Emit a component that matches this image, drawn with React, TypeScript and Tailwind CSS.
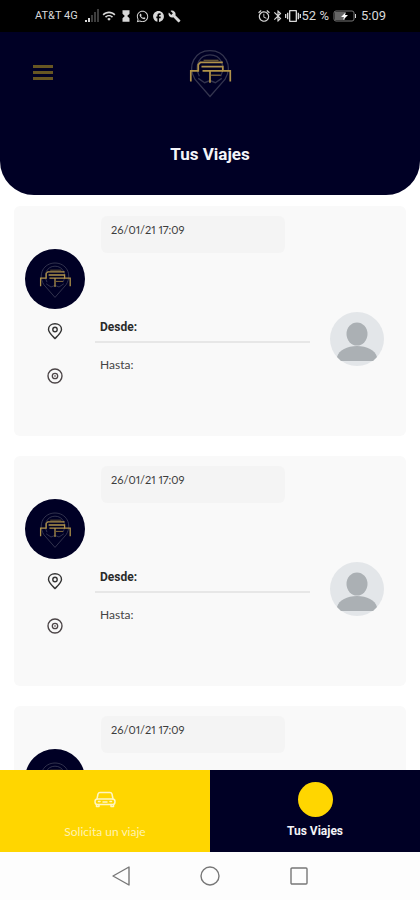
import React from "react";
import {
  MdAlarm,
  MdBluetooth,
  MdBuild,
  MdFacebook,
  MdHourglassFull,
  MdVibration,
  MdWifi,
} from "react-icons/md";
import { FaWhatsapp } from "react-icons/fa";

type Trip = { id: number; date: string };

const trips: Trip[] = [
  { id: 1, date: "26/01/21 17:09" },
  { id: 2, date: "26/01/21 17:09" },
  { id: 3, date: "26/01/21 17:09" },
];

function Logo({ className }: { className: string }) {
  return (
    <svg viewBox="0 0 60 60" fill="none" className={className} aria-hidden="true">
      <g stroke="#34354f" strokeWidth="1.2">
        <path d="M30 53 L16 37 C8 24 16 10 30 10 C44 10 52 24 44 37 Z" />
        <path d="M20 34 C15 24 20 14 30 14 C40 14 45 24 40 34 M19 36 L25 40 L30 38 L35 40 L41 36" />
      </g>
      <g stroke="#b0924a" strokeWidth="1.6">
        <path d="M12 39 V29 H19 V23 L21 21 H42" />
        <path d="M22 25 H42 V29 H49 V39" />
        <path d="M23 29 H42 M30 29 V40" />
      </g>
      <path d="M24 19 H38" stroke="#7d6a3b" />
      <path d="M31 33 H40" stroke="#8a703c" strokeWidth="1.2" />
    </svg>
  );
}

function StatusBar() {
  return (
    <div className="flex h-8 shrink-0 items-center justify-between bg-black pr-[34px] pl-[35px] text-[#d8d8d8]">
      <div className="flex items-center gap-[3px]">
        <span className="mr-1 text-[11px] leading-4">AT&amp;T 4G</span>
        <svg viewBox="0 0 14 14" className="size-[14px]" aria-hidden="true">
          <path d="M0 11h2v2H0z M3 9h2v4H3z" fill="#d8d8d8" />
          <path d="M6 6h2v7H6z M9 3h2v10H9z M12 0h2v13h-2z" fill="#3c3c3c" />
        </svg>
        <MdWifi className="size-[14px]" />
        <MdHourglassFull className="size-[14px]" />
        <FaWhatsapp className="size-[13px]" />
        <MdFacebook className="size-[13px]" />
        <MdBuild className="size-[13px]" />
      </div>
      <div className="flex items-center">
        <MdAlarm className="size-[14px]" />
        <MdBluetooth className="size-[14px]" />
        <MdVibration className="size-4" />
        <span className="ml-px text-[13px] leading-4">52 %</span>
        <svg viewBox="0 0 24 12" className="mx-1 h-3 w-6" aria-hidden="true">
          <rect x="1" y="1" width="20" height="10" rx="2" fill="none" stroke="#777777" />
          <rect x="2" y="2" width="10" height="8" fill="#666666" />
          <path d="M22 4h1v4h-1z" fill="#d8d8d8" />
          <path d="M13 2 L8 7 H11 L10 10 L15 5 H12 Z" fill="#ffffff" />
        </svg>
        <span className="text-[13px] leading-4">5:09</span>
      </div>
    </div>
  );
}

function Header() {
  return (
    <header className="h-[163px] shrink-0 rounded-b-[34px] bg-[#000025]">
      <div className="grid grid-cols-3 items-start">
        <button type="button" aria-label="Menú" className="mt-[33px] ml-[33px] w-5">
          <span className="flex flex-col gap-[3px]">
            <span className="h-[3px] bg-[#675622]" />
            <span className="h-[3px] bg-[#675622]" />
            <span className="h-[3px] bg-[#675622]" />
          </span>
        </button>
        <Logo className="mt-2 size-16 justify-self-center" />
      </div>
      <h1 className="mt-10 text-center text-[17px] leading-5 font-bold text-[#f4f4f8]">Tus Viajes</h1>
    </header>
  );
}

function Avatar() {
  return (
    <svg viewBox="0 0 54 54" className="size-[54px]" role="img" aria-label="Conductor">
      <circle cx="27" cy="27" r="27" fill="#e3e6e9" />
      <ellipse cx="27" cy="22" rx="10.5" ry="11.5" fill="#abb0b4" />
      <path d="M7 45 C9 38 17 34 27 34 C37 34 45 38 47 45 C45 47 43 49 43 49 H11 C11 49 9 47 7 45 Z" fill="#abb0b4" />
    </svg>
  );
}

function TripCard({ trip }: { trip: Trip }) {
  return (
    <article className="flex h-[230px] shrink-0 rounded-md bg-[#f9f9f9] pr-[22px] pl-[11px]">
      <div className="flex w-[60px] flex-col items-center pt-[43px]">
        <div className="flex size-[60px] items-center justify-center rounded-full bg-[#000025]">
          <Logo className="size-12" />
        </div>
        <svg viewBox="0 0 18 18" fill="none" stroke="#343434" className="mt-[13px] size-[18px]" aria-hidden="true">
          <path d="M9 16.5 C6 13.5 2.5 10.5 2.5 7.5 C2.5 4 5.4 1.7 9 1.7 C12.6 1.7 15.5 4 15.5 7.5 C15.5 10.5 12 13.5 9 16.5 Z" strokeWidth="1.4" />
          <circle cx="9" cy="7.5" r="2.2" strokeWidth="1.4" />
        </svg>
        <svg viewBox="0 0 18 18" fill="none" stroke="#4d4648" className="mt-[27px] size-[18px]" aria-hidden="true">
          <circle cx="9" cy="9" r="7" strokeWidth="1.4" />
          <circle cx="9" cy="9" r="2.7" strokeWidth="1.3" />
          <circle cx="9" cy="9" r="1" fill="#8a8485" stroke="none" />
        </svg>
      </div>
      <div className="ml-[10px] flex-1 pt-[10px]">
        <div className="ml-[6px] h-[37px] max-w-[184px] rounded-md bg-[#f4f4f4] px-[10px] pt-1">
          <time className="block font-['Lato','Noto_Sans',sans-serif] text-[11px] leading-5 text-[#3c3c3c] proportional-nums">{trip.date}</time>
        </div>
        <p className="mt-16 border-b-2 border-[#e7e7e7] pb-1 pl-[5px] text-xs leading-5 font-bold text-[#2a2a2a]">Desde:</p>
        <p className="mt-3 pl-[5px] font-['Lato','Noto_Sans',sans-serif] text-xs leading-5 text-[#444444]">Hasta:</p>
      </div>
      <div className="ml-5 pt-[106px]">
        <Avatar />
      </div>
    </article>
  );
}

function TabBar() {
  return (
    <nav className="grid h-[82px] shrink-0 grid-cols-2">
      <button type="button" className="flex flex-col items-center bg-[#ffd600] pt-5">
        <svg viewBox="0 0 22 20" fill="none" stroke="#fff6c4" strokeWidth="1.5" strokeLinejoin="round" strokeLinecap="round" className="h-5 w-[22px]" aria-hidden="true">
          <path d="M3 9 L4 4 Q4.500 2.500 6 2.500 H16 Q17.500 2.500 18 4 L19 9" />
          <path d="M3.500 9 H18.500 Q21 9 21 11.500 Q21 14.500 19 14.500 H3 Q1 14.500 1 11.500 Q1 9 3.500 9 Z" />
          <path d="M2.500 14.500 V16.500 H5 V14.500 M17 14.500 V16.500 H19.500 V14.500 M4.500 11.500 H6 M9 12 H13 M16 11.500 H17.500" />
        </svg>
        <span className="mt-3 font-['Lato','Noto_Sans',sans-serif] text-xs leading-5 text-[#fff3b0]">Solicita un viaje</span>
      </button>
      <button type="button" aria-current="page" className="flex flex-col items-center bg-[#000025] pt-3">
        <span className="size-[35px] rounded-full bg-[#ffd600]" />
        <span className="mt-1 text-xs leading-5 font-bold text-[#f4f4f8]">Tus Viajes</span>
      </button>
    </nav>
  );
}

function SystemNav() {
  return (
    <div className="flex h-12 shrink-0 items-center justify-center gap-[69px] bg-[#fdfdfd] text-[#777777]">
      <button type="button" aria-label="Atrás">
        <svg viewBox="0 0 20 20" fill="none" stroke="currentColor" strokeWidth="1.4" strokeLinejoin="round" className="size-5">
          <path d="M18 1 V19 L2 10 Z" />
        </svg>
      </button>
      <button type="button" aria-label="Inicio">
        <svg viewBox="0 0 20 20" fill="none" stroke="currentColor" strokeWidth="1.4" className="size-5">
          <circle cx="10" cy="10" r="9" />
        </svg>
      </button>
      <button type="button" aria-label="Recientes">
        <svg viewBox="0 0 20 20" fill="none" stroke="currentColor" strokeWidth="1.4" className="size-5">
          <rect x="2" y="2" width="16" height="16" rx="1" />
        </svg>
      </button>
    </div>
  );
}

export default function App() {
  return (
    <div className="flex h-screen flex-col overflow-hidden bg-white font-['Roboto','Noto_Sans',sans-serif]">
      <StatusBar />
      <Header />
      <main className="flex min-h-0 flex-1 flex-col gap-5 overflow-y-auto px-[14px] pt-[11px] [scrollbar-width:none]">
        {trips.map((trip) => (
          <TripCard key={trip.id} trip={trip} />
        ))}
      </main>
      <TabBar />
      <SystemNav />
    </div>
  );
}
